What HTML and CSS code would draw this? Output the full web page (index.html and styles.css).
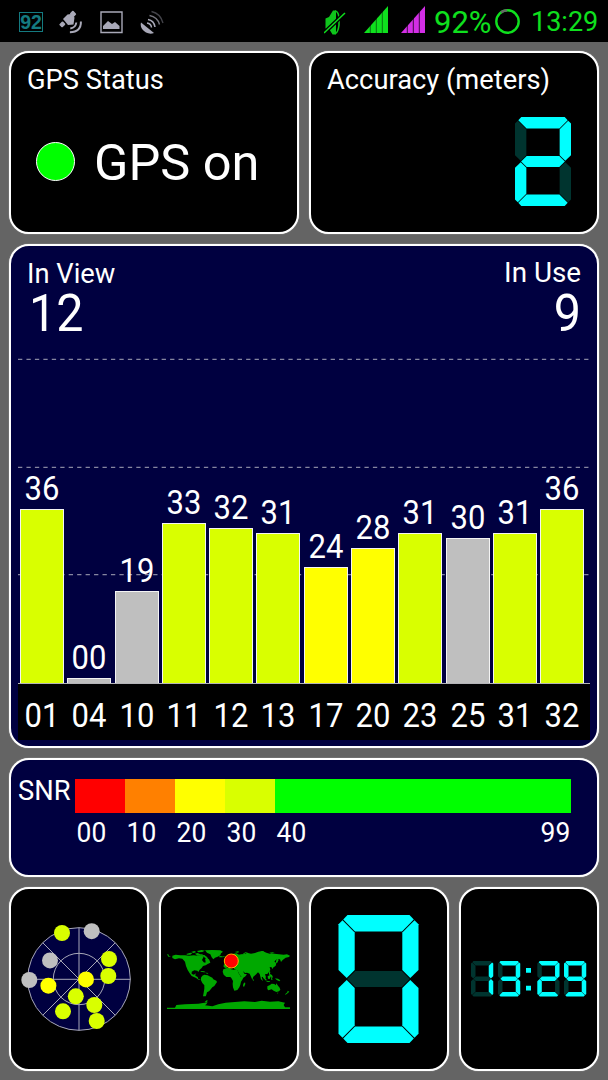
FILE: index.html
```html
<!DOCTYPE html>
<html lang="en">
<head>
<meta charset="utf-8">
<title>GPS Status</title>
<link rel="stylesheet" href="styles.css">
</head>
<body>
<svg class="defs" aria-hidden="true">
  <defs>
    <polygon id="a" points="9,0 71,0 75.3,4.5 63.5,16.5 16.5,16.5 4.7,4.5"/>
    <polygon id="f" points="4,5.3 16.2,17.5 16.2,55 8.2,63 0,55 0,9.3"/>
    <polygon id="b" points="76,5.3 63.8,17.5 63.8,55 71.8,63 80,55 80,9.3"/>
    <polygon id="g" points="8.7,64 16.7,56 63.3,56 71.3,64 63.3,72 16.7,72"/>
    <polygon id="e" points="4,122.7 16.2,110.5 16.2,73 8.2,65 0,73 0,118.7"/>
    <polygon id="c" points="76,122.7 63.8,110.5 63.8,73 71.8,65 80,73 80,118.7"/>
    <polygon id="d" points="9,128 71,128 75.3,123.5 63.5,111.5 16.5,111.5 4.7,123.5"/>
  </defs>
</svg>

<header class="statusbar">
  <div class="notes">
    <span class="level">92</span>
    <svg width="24" height="24" viewBox="0 0 24 24" fill="#a9a9b8">
      <path d="M4 9L8.500 4.500 12 4l3.500 3.500L14.500 14.500 9 15z"/>
      <rect x="11.500" y="1.500" width="5.200" height="4.600" rx="1" transform="rotate(45 14 3.800)"/>
      <rect x=".8" y="12.200" width="5" height="4.400" rx="1" transform="rotate(-45 3.300 14.400)"/>
      <g fill="none" stroke="#a9a9b8" stroke-width="2"><path d="M17.300 12.500q-.5 5-6 6"/><path d="M21.900 11.500q.3 10.500-11 10.700"/></g>
    </svg>
    <svg width="24" height="24" viewBox="0 0 24 24" fill="#a9a9b8">
      <path d="M2 2h21v20.500H2z" fill="none" stroke="#a9a9b8" stroke-width="1.400"/>
      <path d="M4 19v-3l5-5 4 3 3-2 4.500 4v3z"/>
    </svg>
    <svg width="25" height="24" viewBox="0 0 25 24" fill="none">
      <path d="M2 12.500l13 10.500q-4 1.500-8-.5Q.5 18.500 2 12.500z" fill="#a9a9b8"/>
      <path d="M8 13q4 .5 4.500 4.500" stroke="#a9a9b8" stroke-width="1.500"/>
      <path d="M9 9.500q6 1 7 7.500" stroke="#a9a9b8" stroke-width="1.500"/>
      <path d="M10.500 5.500q8 1.500 10 9" stroke="#77777f" stroke-width="1.400"/>
      <path d="M12.500 1.500q9 2 11.500 11.500" stroke="#44444a" stroke-width="1.300"/>
    </svg>
  </div>
  <svg width="22" height="28" viewBox="0 0 22 28">
    <path d="M1.500 10.500l3.500-1.500 4-6.500h3v24h-3.500l-3-5-4-1z" fill="#0fc51c"/>
    <path d="M11 3q3 0 4 6v8q-1 8-4 8.500" fill="none" stroke="#0fc51c" stroke-width="1.600"/>
    <path d="M0 25L21 5" stroke="#000" stroke-width="4"/>
    <path d="M0 25L21 5" stroke="#0fe01e" stroke-width="1.500"/>
  </svg>
  <svg class="signal" width="24" height="28" viewBox="0 0 24 28">
    <path d="M0 27L24 0v27z" fill="#0fe01e"/>
    <path d="M6.300 10v17M12.300 4v23M18.300 0v27" stroke="#000" stroke-opacity=".55" stroke-width=".9"/>
  </svg>
  <svg class="signal" width="24" height="28" viewBox="0 0 24 28">
    <path d="M0 27L24 0v27z" fill="#d32ee6"/>
    <path d="M6.300 10v17M12.300 4v23M18.300 0v27" stroke="#000" stroke-opacity=".8" stroke-width=".9"/>
  </svg>
  <span class="battery">92%</span>
  <svg width="26" height="26" viewBox="0 0 26 26" fill="none">
    <circle cx="12.500" cy="12.500" r="11.200" stroke="#0fe01e" stroke-width="2.400"/>
    <path d="M6 3.400A11.200 11.200 0 0 1 12 1.300" stroke="#666" stroke-width="2.600"/>
  </svg>
  <span class="clock">13:29</span>
</header>

<main class="panels">
  <section class="row two">
    <div class="card status">
      <h2>GPS Status</h2>
      <p><i class="led"></i>GPS on</p>
    </div>
    <div class="card accuracy">
      <h2>Accuracy (meters)</h2>
      <svg width="56" height="89" viewBox="0 0 80 128" preserveAspectRatio="none">
        <g class="off"><use href="#f"/><use href="#c"/></g>
        <g class="on"><use href="#a"/><use href="#b"/><use href="#g"/><use href="#e"/><use href="#d"/></g>
      </svg>
    </div>
  </section>

  <section class="card chart">
    <div class="counts">
      <div><h2>In View</h2><b>12</b></div>
      <div class="used"><h2>In Use</h2><b>9</b></div>
    </div>
    <div class="plot">
      <svg class="grid" width="572" height="325" viewBox="0 0 572 325">
        <path d="M0 1.300H571M0 109.300H571M0 216.600H571"/>
      </svg>
      <div class="col"><span>36</span><i style="height:174px"></i></div>
      <div class="col grey"><span>00</span><i style="height:5px"></i></div>
      <div class="col grey"><span>19</span><i style="height:92px"></i></div>
      <div class="col"><span>33</span><i style="height:160px"></i></div>
      <div class="col"><span>32</span><i style="height:155px"></i></div>
      <div class="col"><span>31</span><i style="height:150px"></i></div>
      <div class="col yellow"><span>24</span><i style="height:116px"></i></div>
      <div class="col yellow"><span>28</span><i style="height:135px"></i></div>
      <div class="col"><span>31</span><i style="height:150px"></i></div>
      <div class="col grey"><span>30</span><i style="height:145px"></i></div>
      <div class="col"><span>31</span><i style="height:150px"></i></div>
      <div class="col"><span>36</span><i style="height:174px"></i></div>
    </div>
    <div class="axis">
      <span>01</span><span>04</span><span>10</span><span>11</span><span>12</span><span>13</span><span>17</span><span>20</span><span>23</span><span>25</span><span>31</span><span>32</span>
    </div>
  </section>

  <section class="card snr">
    <h2>SNR</h2>
    <div class="scale">
      <div class="s0"><i></i><span>00</span></div>
      <div class="s1"><i></i><span>10</span></div>
      <div class="s2"><i></i><span>20</span></div>
      <div class="s3"><i></i><span>30</span></div>
      <div class="s4"><i></i><span>40</span><span>99</span></div>
    </div>
  </section>

  <section class="row four">
    <div class="card">
      <svg width="136" height="180" viewBox="0 0 136 180">
        <g fill="#000040" stroke="#a8a8b8" stroke-width="1">
          <circle cx="68" cy="90" r="51.300"/>
          <circle cx="68" cy="90" r="25.700"/>
          <path d="M16.700 90.300H119.300M68 38.700V141.300M31.700 53.700L104.300 126.300M104.300 53.700L31.700 126.300"/>
        </g>
        <g fill="#bfbfbf"><circle cx="80.700" cy="42.200" r="8"/><circle cx="39" cy="71.400" r="8"/><circle cx="18.300" cy="91" r="8"/></g>
        <g fill="#ff0"><circle cx="75" cy="90.400" r="8"/><circle cx="37.400" cy="96.700" r="8"/></g>
        <g fill="#d9ff00">
          <circle cx="51" cy="44" r="8"/><circle cx="98" cy="70" r="8"/><circle cx="97.300" cy="87" r="8"/>
          <circle cx="64.800" cy="107.300" r="8"/><circle cx="83.300" cy="116" r="8"/><circle cx="52" cy="122.300" r="8"/><circle cx="85.700" cy="132" r="8"/>
        </g>
      </svg>
    </div>
    <div class="card">
      <svg width="136" height="180" viewBox="0 0 136 180">
        <g transform="translate(-6 -9) scale(.33333)" fill="#00a800">
          <path d="M36 223L40 223 42 227 48 230 40 230zM52 227L62 224 76 226 90 226 102 227 116 226 130 227 140 226 146 230 141 240 146 247 151 248 153 236 162 238 166 248 158 252 152 256 144 258 140 264 134 269 130 276 127 272 118 271 110 275 110 282 117 284 122 280 121 287 128 291 130 297 138 300 132 300 122 293 110 288 104 280 98 270 93 258 90 245 82 236 72 235 60 238 52 234Z"/>
          <path d="M94 222l12-4 6 2-6 4-10 0zM108 216l10-3 6 3-8 3zM120 221l8-2 8 4 8 0-4 4-12 0zM126 213l14-3 10 2-8 4-12 1zM138 225l10 0 8 6 4 6 4 8-6-2-8-2 2-6-8-6zM150 211L172 210 196 211 204 215 198 220 196 226 188 230 180 233 175 238 170 232 166 223 156 218z"/>
          <path d="M193 228l10 1-2 3-8 0zM137 273l10 1 6 3-6 0-10-2zM153 278l7 1-2 2-5-1z"/>
          <path d="M142 287L148 284 158 286 166 290 172 293 175 298 184 302 186 306 182 312 178 318 172 322 166 329 162 334 156 337 154 344 152 349 144 349 146 338 148 326 148 316 142 309 138 301 138 293z"/>
          <path d="M205 268L216 264 225 264 228 268 236 269 247 269 251 280 258 291 266 291 262 299 258 305 256 314 253 322 247 330 238 332 234 322 233 312 234 303 229 294 226 291 214 291 206 284 203 275z"/>
          <path d="M265 311l5-4 1 5-4 9-3-3zM201 230l8-2-1 3-6 1z"/>
          <path d="M206 261L206 254 211 251 213 243 221 236 226 227 236 221 244 220 252 224 258 223 270 222 276 218 288 221 300 219 310 215 322 213 334 218 344 221 358 221 372 223 386 224 396 223 405 227 402 231 392 233 383 240 378 246 375 238 366 238 358 244 364 250 362 257 354 263 352 268 350 262 344 261 346 270 338 281 330 283 333 292 328 297 324 290 320 292 324 303 318 298 314 282 309 277 302 284 295 290 292 299 288 290 284 281 276 278 270 279 264 273 268 281 276 283 270 290 262 294 254 284 247 271 238 268 236 262 226 262 222 258 213 265z"/>
          <path d="M239 216l10-2 4 2-6 2zM263 222l8-5 8-1-8 4-4 3zM316 214l8-1 4 3-6 1zM343 218l10-1 6 2-10 2zM363 249l4-1 4-8-3-4-4 4-1 5zM344 272l2 5-1 5 6 3 3 7-5-1-7-8 0-7zM322 288l6 3 7 8-2 3-8-8zM334 302l12 2-3 2-8-1zM338 289l7-4 3 3-4 9-5-1zM348 292l5-1-2 5 2 3-4 1zM360 295l9 1 7 5-3 3-8-4zM294 297l3 3-2 3-2-3z"/>
          <path d="M337 319L345 315 350 311 358 312 362 316 364 310 369 317 374 323 376 329 372 334 364 336 356 332 350 328 340 331 337 327zM366 338l4 0-2 3zM398 332l5 3-5 5-7 5 0-3 6-5z"/>
          <path d="M36 383H60L64 375 90 373 130 371 158 367 154 373 150 376 172 379 190 373 212 368 240 366 268 364 300 366 320 362 345 365 370 364 390 368 386 375 390 382H405V387H36zM149 366l6-5 4 1-5 5z"/>
        </g>
        <circle cx="70.300" cy="72" r="7" fill="#f00" stroke="#ffb400" stroke-width="1"/>
      </svg>
    </div>
    <div class="card">
      <svg width="136" height="180" viewBox="0 0 136 180">
        <g transform="translate(27.500 26)">
          <g class="off"><use href="#g"/></g>
          <g class="on"><use href="#a"/><use href="#b"/><use href="#c"/><use href="#d"/><use href="#e"/><use href="#f"/></g>
        </g>
      </svg>
    </div>
    <div class="card">
      <svg width="136" height="180" viewBox="0 0 136 180">
        <g transform="translate(10 72) scale(.278)">
          <g class="off"><use href="#a"/><use href="#d"/><use href="#e"/><use href="#f"/><use href="#g"/></g>
          <g class="on"><use href="#b"/><use href="#c"/></g>
        </g>
        <g transform="translate(37 72) scale(.278)">
          <g class="off"><use href="#e"/><use href="#f"/></g>
          <g class="on"><use href="#a"/><use href="#b"/><use href="#c"/><use href="#d"/><use href="#g"/></g>
        </g>
        <path class="on" d="M65 79h5v4.700h-5zM65 96.700h5v4.700h-5z"/>
        <g transform="translate(76.300 72) scale(.278)">
          <g class="off"><use href="#c"/><use href="#f"/></g>
          <g class="on"><use href="#a"/><use href="#b"/><use href="#d"/><use href="#e"/><use href="#g"/></g>
        </g>
        <g transform="translate(103 72) scale(.278)">
          <g class="off"><use href="#e"/></g>
          <g class="on"><use href="#a"/><use href="#b"/><use href="#c"/><use href="#d"/><use href="#f"/><use href="#g"/></g>
        </g>
      </svg>
    </div>
  </section>
</main>
</body>
</html>
```

FILE: styles.css
```css
* { box-sizing: border-box; }
body {
  margin: 0;
  width: 608px;
  height: 1080px;
  overflow: hidden;
  background: #646464;
  color: #fff;
  font-family: Roboto, "Liberation Sans", sans-serif;
}
h2, p { margin: 0; font-weight: 400; }
svg { display: block; }
.defs { position: absolute; width: 0; height: 0; }
.on { fill: #0ff; }
.off { fill: #00342f; }

.statusbar {
  display: grid;
  grid-template-columns: 324px 40px 37px 33px 61px 36px auto;
  align-items: center;
  height: 42px;
  background: #000;
  color: #0fe01e;
  white-space: nowrap;
}
.notes { display: flex; gap: 16px; padding-left: 19px; }
.level {
  width: 24px;
  height: 20px;
  margin-top: 2px;
  border: 1px solid #147a80;
  color: #147a80;
  font: bold 19.500px/19px "Liberation Sans", sans-serif;
  text-align: center;
}
.signal { margin-bottom: 4px; }
.battery { font-size: 31px; line-height: 42px; padding-top: 2px; }
.clock { font-size: 27px; line-height: 42px; }

.panels {
  display: flex;
  flex-direction: column;
  gap: 10px;
  padding: 9px;
}
.row { display: grid; gap: 10px; }
.two { grid-template-columns: 1fr 1fr; height: 183px; }
.four { grid-template-columns: repeat(4, 1fr); height: 184px; }
.card {
  border: 2px solid #fff;
  border-radius: 20px;
  background: #000;
  box-shadow: 0 0 1px #ddd;
}
h2 { font-size: 27.300px; line-height: 32px; white-space: nowrap; }

.status { padding: 11px 16px; }
.status p {
  display: flex;
  align-items: center;
  gap: 19px;
  margin-top: 36px;
  padding-left: 9px;
  font-size: 50.500px;
  line-height: 62px;
}
.led {
  width: 39px;
  height: 39px;
  margin-bottom: 3px;
  border: 1.500px solid #fff;
  border-radius: 50%;
  background: #0f0;
}
.accuracy { padding: 11px 26px 0 16px; }
.accuracy svg { margin: 21px 0 0 auto; }

.chart { height: 504px; padding: 12px 7px 0; background: #000040; }
.counts {
  display: flex;
  justify-content: space-between;
  height: 100px;
  padding: 0 9px;
}
.counts b {
  display: block;
  padding-left: 2px;
  font-weight: 400;
  font-size: 51px;
  line-height: 48px;
  transform: scaleX(.95);
  transform-origin: left;
}
.used { text-align: right; }
.used h2 { margin-top: -1px; font-size: 27.800px; }
.used b { transform-origin: right; line-height: 50px; }
.plot {
  position: relative;
  display: flex;
  align-items: flex-end;
  gap: 3.300px;
  height: 325px;
  padding-left: 2px;
}
.grid {
  position: absolute;
  left: 0;
  top: 0;
  fill: none;
  stroke: #8686a0;
  stroke-width: 1.300;
  stroke-dasharray: 4.300 4.150;
}
.col { position: relative; width: 44px; flex: none; font-size: 33px; line-height: 41px; text-align: center; }
.col span { display: block; transform: scaleX(.94); }
.col i {
  display: block;
  background: #d9ff00;
  border: 1px solid #f4f4f4;
  border-bottom: 0;
}
.grey i { background: #bfbfbf; }
.yellow i { background: #ff0; }
.axis {
  display: flex;
  gap: 3.300px;
  height: 57px;
  padding-left: 2px;
  border-top: 1px solid #b4b4b8;
  background: #000;
  font-size: 33px;
  line-height: 63px;
}
.axis span { width: 44px; flex: none; text-align: center; transform: scaleX(.94); }

.snr { display: flex; height: 119px; padding: 14px 0 0 7px; background: #000040; }
.snr h2 { width: 57px; padding-top: 1px; }
.scale { display: flex; width: 496px; padding-top: 5px; font-size: 27.500px; line-height: 40px; }
.scale div { width: 50px; }
.scale i { display: block; height: 33.500px; }
.scale span { display: inline-block; transform: scaleX(.96); padding-left: 1px; }
.s0 i { background: #f00; }
.s1 i { background: #ff8000; }
.s2 i { background: #ff0; }
.s3 i { background: #d9ff00; }
.scale .s4 { width: 296px; display: flex; flex-wrap: wrap; justify-content: space-between; align-content: flex-start; }
.s4 i { width: 100%; background: #0f0; }
```
